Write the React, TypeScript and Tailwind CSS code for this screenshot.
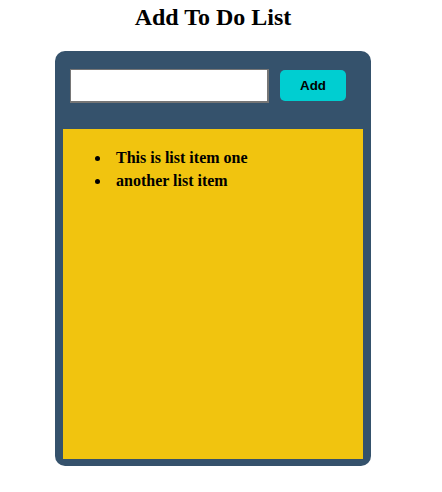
export default function App() {
  return (
    <div className="w-[426px] bg-white" style={{ fontFamily: '"Liberation Serif", serif' }}>
      <h2 className="pt-[4px] text-center text-[24px] font-bold leading-[26.6px] text-black">
        Add To Do List
      </h2>
      <div className="mx-auto mt-[20px] w-[316px] rounded-[10px] bg-[#35526c] px-[8px] pb-[7px] pt-[18px]">
        <div className="flex items-center pl-[7px]">
          <input
            type="text"
            className="h-[34px] w-[199px] border border-b-2 border-r-2 border-[#767676] bg-white outline-none"
          />
          <button
            className="ml-[11px] h-[31px] w-[66px] rounded-[5px] bg-[#00ced1] text-[13.33px] font-bold text-black"
            style={{ fontFamily: '"Liberation Sans", Arial, sans-serif' }}
          >
            Add
          </button>
        </div>
        <div className="mt-[26px] h-[330px] bg-[#f1c40f] pt-[17px]">
          <ul className="list-disc pl-[48px] text-[16px] font-bold leading-[23px] text-black">
            <li className="pl-[5px]">This is list item one</li>
            <li className="pl-[5px]">another list item</li>
          </ul>
        </div>
      </div>
    </div>
  );
}
